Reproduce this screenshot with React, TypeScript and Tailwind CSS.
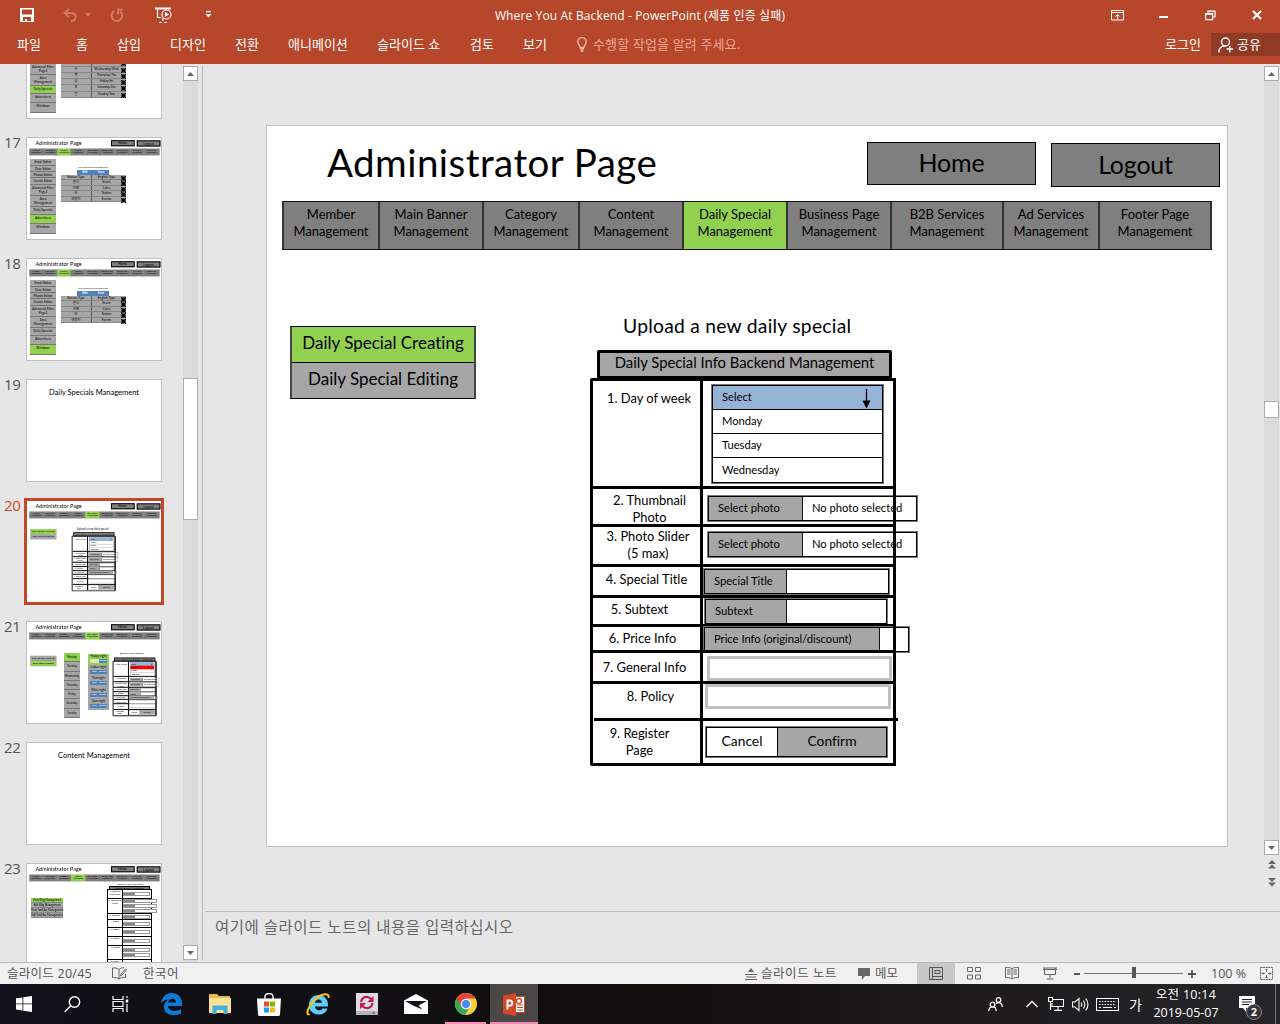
import React from "react";

const CALIBRI = "font-['Lato','Noto_Sans_CJK_KR',sans-serif] [font-variant-ligatures:none]";

/* ---------- slide content ---------- */

const NAV: [string, string][] = [
  ["Member", "w-[96px]"],
  ["Main Banner", "w-[104px]"],
  ["Category", "w-[96px]"],
  ["Content", "w-[104px]"],
  ["Daily Special", "w-[104px]"],
  ["Business Page", "w-[104px]"],
  ["B2B Services", "w-[112px]"],
  ["Ad Services", "w-[96px]"],
  ["Footer Page", "w-[112px]"],
];

function SlideHeader({ active, mini }: { active: number; mini?: boolean }) {
  const edge = mini ? "border-[7px]" : "border";
  return (
    <>
      <div className="absolute left-[60px] top-[12px] whitespace-nowrap text-[38.5px] leading-[48px] tracking-[0.45px]">Administrator Page</div>
      <div className={`absolute left-[600px] top-[16px] flex h-[43px] w-[169px] items-center justify-center border-black bg-[#7f7f7f] pb-px text-[25px] tracking-[-0.2px] ${edge}`}>Home</div>
      <div className={`absolute left-[784px] top-[17px] flex h-[44px] w-[169px] items-center justify-center border-black bg-[#7f7f7f] pb-px text-[25px] tracking-[-0.2px] ${edge}`}>Logout</div>
      <div className="absolute left-[15px] top-[75px] flex h-[49px] border-y-[1.5px] border-l-2 border-y-[#111] border-l-[#333]">
        {NAV.map(([name, w], i) => (
          <div key={name} className={`${w} border-r-2 border-[#333] pt-[4px] text-center text-[13px] leading-[17px] ${i === active ? "bg-[#92d050]" : "bg-[#7f7f7f]"}`}>
            {name}
            <br />
            Management
          </div>
        ))}
      </div>
    </>
  );
}

function SideMenu({ active, className }: { active: number; className: string }) {
  return (
    <div className={`absolute left-[23px] w-[186px] border-x-2 border-y border-x-[#444] border-y-black text-center text-[17px] ${className}`}>
      <div className={`h-[36px] border-b border-black leading-[32px] ${active === 0 ? "bg-[#92d050]" : "bg-[#a6a6a6]"}`}>Daily Special Creating</div>
      <div className={`h-[35px] leading-[32px] ${active === 1 ? "bg-[#92d050]" : "bg-[#a6a6a6]"}`}>Daily Special Editing</div>
    </div>
  );
}

const ROWS: [string[], string][] = [
  [["1. Day of week"], "h-[108px] pt-[9px] pl-[5px] border-b-[3px] group-[.mini]:border-b-[7px]"],
  [["2. Thumbnail", "Photo"], "h-[38px] pt-[3px] pl-[6px] border-b-[3px] group-[.mini]:border-b-[7px]"],
  [["3. Photo Slider", "(5 max)"], "h-[40px] pt-[1px] pl-[3px] border-b-[3px] group-[.mini]:border-b-[7px]"],
  [["4. Special Title"], "h-[31px] pt-[4px] border-b-[3px] group-[.mini]:border-b-[7px]"],
  [["5. Subtext"], "h-[29px] pt-[3px] pr-[14px] border-b-[3px] group-[.mini]:border-b-[7px]"],
  [["6. Price Info"], "h-[26px] pt-[3px] pr-[8px] border-b-[3px] group-[.mini]:border-b-[7px]"],
  [["7. General Info"], "h-[31px] pt-[6px] pr-[4px] border-b-[3px] group-[.mini]:border-b-[7px]"],
  [["8. Policy"], "h-[37px] pt-[4px] pl-[8px]"],
  [["9. Register", "Page"], "h-[42px] pt-[4px] pr-[14px]"],
];

function Pair({ className, left, right, leftW }: { className: string; left: string; right?: string; leftW: string }) {
  return (
    <div className={`absolute flex h-[25px] border-[1.5px] border-black bg-white text-[11.2px] outline-[0.5px] outline-[#777] ${className}`}>
      <div className={`flex shrink-0 items-center whitespace-nowrap border-r-[1.5px] border-[#111] bg-[#a6a6a6] pl-[9px] ${leftW}`}>{left}</div>
      <div className="flex items-center whitespace-nowrap pl-[9px]">{right}</div>
    </div>
  );
}

function SpecialForm({ className, title, titlePos, picked }: { className: string; title: string; titlePos: string; picked?: boolean }) {
  return (
    <div className={`absolute h-[450px] w-[340px] ${className}`}>
      <div className={`absolute whitespace-nowrap leading-[24px] ${titlePos}`}>{title}</div>
      <div className="absolute left-[7px] top-[34px] flex h-[29px] w-[295px] items-center justify-center whitespace-nowrap rounded-[2px] border-[3px] border-black bg-[#a6a6a6] text-[14.8px] group-[.mini]:border-[7px]">
        <span className="relative -top-[2px]">Daily Special Info Backend Management</span>
      </div>
      <div className="absolute left-0 top-[62px] flex h-[388px] w-[306px] rounded-[2px] border-[3px] border-black bg-white group-[.mini]:outline-[4px]">
        <div className="w-[110px] border-r-[3px] border-black text-center text-[12.9px] leading-[17px] group-[.mini]:border-r-[7px]">
          {ROWS.map(([lines, cls]) => (
            <div key={lines[0]} className={`whitespace-nowrap border-black ${cls}`}>
              {lines.map((l) => <div key={l}>{l}</div>)}
            </div>
          ))}
        </div>
        <div className="flex-1">
          {ROWS.map(([lines, cls]) => <div key={lines[0]} className={`border-black ${cls}`} />)}
        </div>
      </div>
      <div className="absolute left-[4px] top-[402px] h-[3px] w-[304px] bg-black group-[.mini]:h-[7px]" />
      <div className="absolute left-[122px] top-[69px] h-[98px] w-[171px] border-[1.5px] border-black bg-white text-[11.2px] outline-[0.5px] outline-[#777]">
        <div className="flex h-[24px] items-center border-b border-black bg-[#95b3d7] pl-[9px]">Select</div>
        <div className={`flex h-[24px] items-center border-b border-black pl-[9px] ${picked ? "bg-[#ff0000]" : ""}`}>Monday</div>
        <div className="flex h-[24px] items-center border-b border-black pl-[9px]">Tuesday</div>
        <div className="flex h-[24px] items-center pl-[9px]">Wednesday</div>
      </div>
      <svg className="absolute left-[271px] top-[73px]" width="10" height="20" viewBox="0 0 10 20">
        <path d="M5.500 0v14" stroke="#000" strokeWidth="1.300" />
        <path d="M1.500 11.500h8l-4 8z" />
      </svg>
      <Pair className="left-[118px] top-[180px] w-[209px]" left="Select photo" right="No photo selected" leftW="w-[94px]" />
      <Pair className="left-[118px] top-[216px] w-[209px]" left="Select photo" right="No photo selected" leftW="w-[94px]" />
      <Pair className="left-[114px] top-[253px] w-[185px]" left="Special Title" leftW="w-[82px]" />
      <Pair className="left-[115px] top-[283px] w-[182px]" left="Subtext" leftW="w-[81px]" />
      <div className="absolute left-[113px] top-[308px] h-[3px] w-[192px] bg-black" />
      <Pair className="left-[114px] top-[311px] w-[205px]" left="Price Info (original/discount)" leftW="w-[175px]" />
      <div className="absolute left-[113px] top-[334px] h-[3px] w-[192px] bg-black" />
      <div className="absolute left-[117px] top-[340px] h-[25px] w-[185px] rounded-[1px] border-[3px] border-[#bfbfbf] bg-white" />
      <div className="absolute left-[115px] top-[368px] h-[25px] w-[186px] rounded-[1px] border-[3px] border-[#bfbfbf] bg-white" />
      <div className="absolute left-[116px] top-[411px] flex h-[30px] w-[181px] border-[1.5px] border-black text-[13.800px] outline-[0.5px] outline-[#777]">
        <div className="flex w-[71px] items-center justify-center border-r-[1.5px] border-black bg-white pb-px">Cancel</div>
        <div className="flex flex-1 items-center justify-center bg-[#a6a6a6] pb-px">Confirm</div>
      </div>
      <div className="absolute left-[303px] top-[62px] h-[388px] w-[3px] bg-black group-[.mini]:w-[7px]" />
    </div>
  );
}

function DailySlide({ mini }: { mini?: boolean }) {
  return (
    <div className={`relative h-[720px] w-[960px] shrink-0 bg-white text-black ${CALIBRI}`}>
      <SlideHeader active={4} mini={mini} />
      <SideMenu active={0} className="top-[200px]" />
      <SpecialForm className="left-[323px] top-[190px]" title="Upload a new daily special" titlePos="left-[33px] top-[-2px] text-[19.3px] tracking-[0.250px]" />
    </div>
  );
}

/* ---------- slide thumbnails ---------- */

function Scaled({ children }: { children: React.ReactNode }) {
  return <div className={`group mini absolute left-0 top-0 h-[720px] w-[960px] origin-top-left scale-[0.14] text-black ${CALIBRI}`}>{children}</div>;
}

const FILTERS: [string, string][] = [
  ["Email Editor", "h-[7px]"],
  ["Date Editor", "h-[6px]"],
  ["Photos Editor", "h-[6px]"],
  ["Search Editor", "h-[7px]"],
  ["Advanced Filter Page2", "h-[11px]"],
  ["Area Management", "h-[11px]"],
  ["Daily Specials", "h-[8px]"],
  ["Advertisers", "h-[9px]"],
  ["Windows", "h-[10px]"],
];

function RowMark() {
  return (
    <svg className="mt-px" width="5" height="5" viewBox="0 0 5 5">
      <path d="M.5.500h4v4h-4z" />
      <path d="M0 0l5 5M5 0L0 5" stroke="#000" />
    </svg>
  );
}

function FilterSlide({ active, days }: { active: number; days?: boolean }) {
  const rows = days
    ? [["월", "Monday"], ["화", "Tuesday/Tue"], ["수", "Wednesday/Wed"], ["목", "Thursday/Thu"], ["금", "Friday/Fri"], ["토", "Saturday/Sat"], ["일", "Sunday/Sun"]]
    : [["Korean Type", "English Type"], ["한식", "Event"], ["카페", "Cafes"], ["바", "Nation"], ["여행지", "Events"]];
  return (
    <div className={CALIBRI}>
      <Scaled><SlideHeader active={2} mini /></Scaled>
      <div className="absolute left-[3px] top-[21px] w-[26px] bg-[#a6a6a6] text-center text-[3.2px] leading-[4px]">
        {FILTERS.map(([f, h], i) => (
          <div key={f} className={`${h} border-b border-[#777] px-[2px] pt-[0.5px] ${i === active ? "bg-[#92d050]" : ""}`}>{f}</div>
        ))}
      </div>
      <div className="absolute left-[51px] top-[28px] whitespace-nowrap text-[2.1px] leading-[3px]">Click and drag to rearrange order</div>
      <div className="absolute left-[50px] top-[32px] flex h-[5px] w-[32px] bg-[#4f81bd] text-center text-[3px] font-bold leading-[5px] text-white">
        <span className="flex-1">Edit</span><span className="flex-1">Save</span>
      </div>
      <div className="absolute left-[34px] top-[37px] w-[65px] text-center text-[3.2px] leading-[4px]">
        {rows.map(([a, b]) => (
          <div key={b} className={`flex items-stretch border-b border-[#888] bg-[#a6a6a6] ${days ? "h-[6.3px]" : "h-[5.4px]"}`}>
            <span className="w-[31px] border-r border-[#555]">{a}</span>
            <span className="flex-1">{b}</span>
            <RowMark />
          </div>
        ))}
      </div>
    </div>
  );
}

function EditSlide() {
  return (
    <div className={CALIBRI}>
      <Scaled>
        <SlideHeader active={4} mini />
        <SideMenu active={1} className="top-[242px]" />
        <SpecialForm className="left-[615px] top-[219px]" picked title="Edit this daily special" titlePos="left-[48px] top-[-12px] text-[19px]" />
      </Scaled>
      <div className="absolute left-[37px] top-[31px] w-[16px] bg-[#a6a6a6] text-center text-[2.8px] leading-[8px]">
        {["Monday", "Tuesday", "Wednesday", "Thursday", "Friday", "Saturday", "Sunday"].map((d, i) => (
          <div key={d} className={`h-[9.3px] border-b border-[#777] ${i === 0 ? "bg-[#92d050]" : ""}`}>{d}</div>
        ))}
      </div>
      <div className="absolute left-[61px] top-[32px] w-[21px] bg-[#a6a6a6] text-center text-[3px] leading-[5px]">
        {["Happy night", "Ladies night", "Pub night", "Wine night", "Quiz night"].map((d, i) => (
          <div key={d} className={`h-[11.2px] whitespace-nowrap px-[2px] ${i === 0 ? "bg-[#92d050]" : ""}`}>
            {d}
            <div className="flex h-[4px] text-[2.4px] leading-[4px] text-white">
              <span className={`flex-1 ${i === 0 ? "bg-[#d7e4bd]" : "bg-[#4f81bd]"}`}>Edit</span>
              <span className="flex-1 bg-[#4f81bd]">Delete</span>
            </div>
          </div>
        ))}
      </div>
    </div>
  );
}

const CONTENT_ROWS: [string, string, number][] = [
  ["1. Thumbnail Photo/Video", "h-[9px]", 1],
  ["2. Photo Slider (5 max)", "h-[15px]", 3],
  ["3. Blog Title", "h-[6px]", 1],
  ["4. Subtext", "h-[8px]", 1],
  ["5. Category", "h-[9px]", 1],
  ["6. Content", "h-[9px]", 1],
  ["7. Heading", "h-[14px]", 2],
  ["8. Footer", "h-[9px]", 1],
];

function ContentSlide() {
  return (
    <div className={CALIBRI}>
      <Scaled><SlideHeader active={3} mini /></Scaled>
      <div className="absolute left-[4px] top-[34px] w-[32px] bg-[#a6a6a6] text-center text-[2.7px] leading-[4px]">
        {["View Blog Management", "Edit Blog Management", "View YouTube Management", "Edit YouTube Management"].map((d, i) => (
          <div key={d} className={`h-[5px] whitespace-nowrap border-b border-[#888] ${i === 0 ? "bg-[#92d050]" : ""}`}>{d}</div>
        ))}
      </div>
      <div className="absolute left-[90px] top-[18px] whitespace-nowrap text-[2.6px] leading-[4px]">Create a new blog post</div>
      <div className="absolute left-[82px] top-[22px] h-[4px] w-[41px] border border-black bg-[#777] text-center text-[2px] leading-[2px]">Blog Info Backend Management</div>
      <div className="absolute left-[80px] top-[25px] w-[45px] border border-black bg-white">
        {CONTENT_ROWS.map(([t, h, n]) => (
          <div key={t} className={`flex border-b border-black ${h}`}>
            <div className="w-[15px] shrink-0 border-r border-black text-center text-[1.9px] leading-[2.5px]">{t}</div>
            <div className="flex w-[27px] shrink-0 flex-col justify-center gap-[1px]">
              {Array.from({ length: n }, (_, k) => (
                <div key={k} className={`flex h-[4px] border border-[#999] bg-white ${h === "h-[15px]" ? "w-[34px]" : "w-[27px]"}`}>
                  <span className="w-[11px] bg-[#888]" />
                </div>
              ))}
            </div>
          </div>
        ))}
      </div>
    </div>
  );
}

function TitleSlide({ text }: { text: string }) {
  return <div className={`pt-[8px] text-center text-[7.5px] leading-[9px] text-black ${CALIBRI}`}>{text}</div>;
}

function Thumb({ n, active, children }: { n: number; active?: boolean; children: React.ReactNode }) {
  return (
    <div className="flex h-[121px] shrink-0">
      <div className={`mt-[-1px] w-[26px] pl-[4px] text-[15px] leading-[12px] tracking-[-0.4px] ${active ? "text-[#d24726]" : "text-[#555]"}`}>{n}</div>
      <div className={`relative h-[103px] w-[136px] border bg-white ${active ? "border-[#c5472a] outline-2 outline-[#c5472a]" : "border-[#c0c0c0]"}`}>
        <div className="relative h-[101px] w-[134px] overflow-hidden">{children}</div>
      </div>
    </div>
  );
}

/* ---------- window chrome ---------- */

function ScrollButton({ up }: { up?: boolean }) {
  return (
    <div className="flex h-[15px] w-[15px] shrink-0 items-center justify-center border border-[#ababab] bg-white">
      <svg width="7" height="4" viewBox="0 0 7 4" fill="#666"><path d={up ? "M0 4L3.500 0 7 4z" : "M0 0h7L3.500 4z"} /></svg>
    </div>
  );
}

function TitleBar() {
  return (
    <header className="h-[64px] shrink-0 bg-[#b7472a] text-[13px] text-white">
      <div className="grid h-[32px] grid-cols-[1fr_auto_1fr] items-center">
        <div className="flex items-center pb-[2px] pl-[20px]">
          <svg width="14" height="14" viewBox="0 0 14 14"><path fill="#fff" fillRule="evenodd" d="M0 0h14v14H0zM2 1.500v5h10v-5zM3 9v4h2v-2h2v2h4V9z" /></svg>
          <svg className="ml-[29px]" width="29" height="15" viewBox="0 0 29 15" fill="none" stroke="#d27a63" strokeWidth="2"><path d="M6 1L1.500 5 6 9M2 5h7c5 0 5 8-1 8" /><path d="M22 5h6l-3 3.500z" fill="#d27a63" stroke="none" /></svg>
          <svg className="ml-[18px]" width="14" height="15" viewBox="0 0 14 15" fill="none" stroke="#d27a63" strokeWidth="2"><path d="M4 3.200a5.300 5.300 0 1 0 6 .2M7 1.500h5.500M8 1v5.500" /></svg>
          <svg className="ml-[31px]" width="17" height="17" viewBox="0 0 17 17" fill="none" stroke="#fff" strokeWidth="1.200"><path d="M0 1.500h16" strokeWidth="2" /><path d="M2.500 2v8.500H6M8 11v3M4 15.500h3M9 15.500h3" /><circle cx="11.500" cy="7.500" r="4.500" /><path d="M10 5v5l4-2.500z" fill="#fff" stroke="none" /></svg>
          <svg className="ml-[33px]" width="7" height="8" viewBox="0 0 7 8" fill="#fff"><path d="M1 0h5v1.200H1zM.5 3h6l-3 3.500z" /></svg>
        </div>
        <div className="whitespace-nowrap pl-[0px] text-[12px] tracking-[0.13px]">Where You At Backend - PowerPoint (제품 인증 실패)</div>
        <div className="flex items-center justify-end pb-[2px] pr-[18px]">
          <svg width="13" height="11" viewBox="0 0 13 11" fill="none" stroke="#fff"><path d="M.5.500h12v9.500H.5zM.5 2.500h12M6.500 9.500V5M4.500 6.500l2-2 2 2" /></svg>
          <svg className="ml-[35px] mt-[4px]" width="9" height="2" viewBox="0 0 9 2"><path fill="#fff" d="M0 0h9v2H0z" /></svg>
          <svg className="ml-[37px]" width="11" height="11" viewBox="0 0 11 11" fill="none" stroke="#fff" strokeWidth="1.200"><path d="M.6 3.600h7v6h-7zM3 3.500V1h7v6H8M3 1.500h7M.5 4.200h7" /></svg>
          <svg className="ml-[36px]" width="10" height="10" viewBox="0 0 10 10"><path d="M1 1l8 8M9 1L1 9" stroke="#fff" strokeWidth="2.200" /></svg>
        </div>
      </div>
      <nav className="flex h-[25px] items-center whitespace-nowrap pl-[17px]">
        <span className="w-[59px]">파일</span>
        <span className="w-[41px]">홈</span>
        <span className="w-[53px]">삽입</span>
        <span className="w-[65px]">디자인</span>
        <span className="w-[53px]">전환</span>
        <span className="w-[89px]">애니메이션</span>
        <span className="w-[93px]">슬라이드 쇼</span>
        <span className="w-[53px]">검토</span>
        <span className="w-[54px]">보기</span>
        <svg className="mr-[6px]" width="10" height="15" viewBox="0 0 10 15" fill="none" stroke="#eeb5a6" strokeWidth="1.400"><path d="M3 10.500C3 8 .8 7.500.8 4.800a4.200 4.200 0 0 1 8.400 0C9.200 7.500 7 8 7 10.500zM3 12h4M3.500 14h3" /></svg>
        <span className="tracking-[0.15px] text-[#eaa797]">수행할 작업을 알려 주세요.</span>
        <span className="ml-auto mr-[10px]">로그인</span>
        <div className="flex h-[23px] w-[69px] items-center gap-[4px] bg-[#8f3a24] pl-[7px]">
          <svg width="15" height="16" viewBox="0 0 15 16" fill="none" stroke="#fff" strokeWidth="1.400"><circle cx="7.500" cy="5" r="4" /><path d="M.8 15.500c0-4 2.500-6.500 6-6.500M8.500 12h6.500M11.700 9v6.500" /></svg>
          공유
        </div>
      </nav>
    </header>
  );
}

function StatusBar() {
  return (
    <div className="flex h-[22px] shrink-0 items-center whitespace-nowrap border-t border-[#b8b8b8] bg-[#f0f0f0] pl-[7px] text-[12.5px] text-[#555]">
      <span className="w-[105px] pt-px tracking-[0.250px]">슬라이드 20/45</span>
      <svg width="15" height="13" viewBox="0 0 15 13" fill="none" stroke="#666"><path d="M7 2.500C5 .8 3 .8.500 1v9.500c2.500 0 4.500 0 6.500 1.500V2.500C8.500 1 10 .8 12 .8M7 12c1.500-1.300 3.500-1.500 6.500-1.500V7M8.500 9l.5-2 4.500-5 1 1-4.500 5z" /></svg>
      <span className="ml-[16px] pt-px tracking-[0.500px]">한국어</span>
      <svg className="ml-auto" width="12" height="12" viewBox="0 0 12 12"><path d="M0 6.500h12M1 9h10M0 11.500h12" stroke="#666" /><path d="M6 0l3 4H3z" fill="#666" /></svg>
      <span className="ml-[4px] w-[97px] pt-px tracking-[0.550px]">슬라이드 노트</span>
      <svg width="12" height="12" viewBox="0 0 12 12" fill="#666"><path d="M0 0h12v8H7l-3 4V8H0z" /></svg>
      <span className="ml-[5px] w-[42px] pt-px">메모</span>
      <div className="flex h-[21px] w-[38px] items-center justify-center bg-[#c8c8c8]">
        <svg width="14" height="13" viewBox="0 0 14 13" fill="none" stroke="#555"><path d="M.5.500h13v12H.5zM3.500.500v12M6 3.500h5v3H6zM3.500 9.500h10" /></svg>
      </div>
      <svg className="ml-[12px]" width="14" height="13" viewBox="0 0 14 13" fill="none" stroke="#666"><path d="M.5.500h5v4h-5zM8.500.500h5v4h-5zM.5 8h5v4h-5zM8.500 8h5v4h-5z" /></svg>
      <svg className="ml-[24px]" width="14" height="13" viewBox="0 0 14 13" fill="none" stroke="#666"><path d="M7 1.500C5 .5 3 .5.500.5v10c2.500 0 4.500 0 6.500 1.500C9 10.500 11 10.500 13.500 10.500V.5C11 .5 9 .5 7 1.500v10M2 3h3.500M2 5h3.500M2 7h3.500M8.500 3H12M8.500 5H12M8.500 7H12" /></svg>
      <svg className="ml-[24px]" width="14" height="13" viewBox="0 0 14 13" fill="none" stroke="#666"><path d="M0 1h14M1.500 1v6.500h11V1M7 7.500v4M3.500 12h7M0 2.500h14" /></svg>
      <span className="ml-[17px] h-[2px] w-[6px] bg-[#555]" />
      <div className="relative ml-[4px] h-px w-[99px] bg-[#777]"><span className="absolute left-[48px] top-[-6px] h-[11px] w-[4px] bg-[#555]" /></div>
      <svg className="ml-[5px]" width="8" height="8" viewBox="0 0 8 8"><path d="M0 4h8M4 0v8" stroke="#555" strokeWidth="1.800" /></svg>
      <span className="ml-[15px] w-[49px] pt-px">100 %</span>
      <svg className="mr-[7px]" width="13" height="13" viewBox="0 0 13 13" fill="none" stroke="#666"><path d="M.5.500h12v12H.5z" strokeDasharray="2 .6" /><path d="M6.500 2v3M6.500 8v3M2 6.500h3M8 6.500h3M5.500 3l1-1 1 1M5.500 10l1 1 1-1M3 5.500l-1 1 1 1M10 5.500l1 1-1 1" /></svg>
    </div>
  );
}

function Slot({ children, className = "" }: { children: React.ReactNode; className?: string }) {
  return <div className={`flex h-[40px] w-[49px] items-center justify-center ${className}`}>{children}</div>;
}

function Taskbar() {
  return (
    <div className="flex h-[40px] shrink-0 items-center bg-linear-to-r from-[#10111a] via-[#120e0c] via-50% to-[#26262a] text-white">
      <div className="mr-[3px] flex w-[144px]">
        <Slot className="w-[48px]!"><svg width="16" height="16" viewBox="0 0 16 16" fill="#fff"><path d="M0 2.300L6.500 1.400v6.100H0zM7.300 1.300L16 0v7.500H7.300zM0 8.300h6.500v6.200L0 13.600zM7.300 8.300H16V16l-8.700-1.300z" /></svg></Slot>
        <Slot className="w-[48px]!"><svg width="17" height="17" viewBox="0 0 17 17" fill="none" stroke="#fff" strokeWidth="1.400"><circle cx="10.500" cy="6" r="5.200" /><path d="M6.800 9.800L.7 16" /></svg></Slot>
        <Slot className="w-[48px]!"><svg width="17" height="16" viewBox="0 0 17 16" fill="none" stroke="#fff" strokeWidth="1.200"><path d="M1 0v3.500h10V0M1 16v-3.500h10V16M1 5.500h10v5H1zM15 0v2M15 8v8" /><path d="M15 3.500v3" strokeWidth="2.500" /></svg></Slot>
      </div>
      <Slot><svg width="21" height="22" viewBox="0 0 21 22"><path fill="#0c7cd8" d="M0 10C1 4 5 0 10.500 0 17 0 21 4.500 21 10v3H7c.2 3.500 3.200 5 6.500 5 2.500 0 4.500-.6 6.500-1.700v4.200c-2.300 1-4.500 1.500-7.500 1.500C6.500 22 3 18.500 3 14c0-3.500 2-6 5-7.500-3.500.2-6.500 1.500-8 3.500zM7 9.500h8C15 7 13.600 5.700 11.400 5.700S7.500 7 7 9.500z" /></svg></Slot>
      <Slot className="pr-[2px]"><svg width="22" height="20" viewBox="0 0 22 20"><path fill="#e8b84a" d="M0 0h8l2 2h11v17H0z" /><path fill="#fbe396" d="M0 4h22v15H0z" /><path fill="#45b1e0" d="M3.500 11.500h15V20h-4v-4h-7v4h-4z" /></svg></Slot>
      <Slot className="pr-[2px]"><svg width="24" height="23" viewBox="0 0 24 23"><path d="M8 6V3.500a4 3 0 0 1 8 0V6" fill="none" stroke="#fff" strokeWidth="1.400" /><path fill="#fff" d="M0 5.500h24L23 21.500q0 1.500-2 1.500H3q-2 0-2-1.500z" /><path fill="#e8502c" d="M7 8.500h5v5H7z" /><path fill="#7fb900" d="M13 8.500h5v5h-5z" /><path fill="#18a0e8" d="M7 14.500h5v5H7z" /><path fill="#fdb813" d="M13 14.500h5v5h-5z" /></svg></Slot>
      <Slot><svg width="25" height="25" viewBox="0 0 25 25"><path fill="#5bcdf8" d="M3 13C3 7 7 3 12.500 3S22 7 22 13v1.500H9c.3 2.500 2 3.700 4 3.700 1.700 0 2.700-.5 3.500-1.800h5C20 20.500 17 22.500 12.500 22.500 7 22.500 3 18.500 3 13zM9 10.800h7c-.3-2-1.500-3.300-3.400-3.300S9.400 8.800 9 10.800z" /><path d="M3.500 22C-1 24 2 14 9 7.500S24 .5 22.500 6" fill="none" stroke="#f6c51c" strokeWidth="2" /></svg></Slot>
      <Slot className="pr-[2px]"><svg width="22" height="22" viewBox="0 0 22 22"><path fill="#dedede" d="M0 0h22v22H0z" /><path fill="#b5b5b5" d="M0 18h22v4H0z" /><path d="M5 9c.5-4 3.500-5.500 6.500-5 2 .3 3 1.300 4 2.500M16.500 10c-.5 4-3.500 5.500-6.500 5-2-.3-3-1.300-4-2.500" fill="none" stroke="#c2185b" strokeWidth="2.200" /><path fill="#c2185b" d="M17.500 3v6h-6zM4 16v-6h6z" /><path fill="#555" d="M16 19.500h3v1h-3z" /></svg></Slot>
      <Slot className="pr-[2px]"><svg width="24" height="20" viewBox="0 0 24 20"><path fill="#fff" d="M0 6.500L12 0l12 6.500V20H0z" /><path fill="#11111a" d="M1 7h22l-8.500 4.500 4 4L9 11.500z" /></svg></Slot>
      <Slot className="mx-[4px] w-[41px]! border-b-2 border-[#f58bb8] pt-[2px]">
        <svg width="22" height="22" viewBox="0 0 22 22"><circle cx="11" cy="11" r="11" fill="#fbd037" /><path fill="#e2453a" d="M11 11L1.500 5.500A11 11 0 0 1 20.500 5.500H11z" /><path fill="#3aa757" d="M1.500 5.500A11 11 0 0 0 10 22l5.500-9L11 11z" /><path fill="#e2453a" d="M1.500 5.500L6.500 13 11 6z" /><circle cx="11" cy="11" r="5.300" fill="#fff" /><circle cx="11" cy="11" r="4.200" fill="#4b8bf4" /></svg>
      </Slot>
      <div className="flex h-[40px] w-[48px] items-center justify-center border-b-2 border-[#f58bb8] bg-[#4b4745] pt-[2px]">
        <svg width="22" height="23" viewBox="0 0 22 23"><path fill="#fff" stroke="#d24726" d="M11 3.500h10.500v16H11z" /><path d="M14 12h6M14 14.500h6M14 17h6" stroke="#d24726" /><circle cx="16" cy="8" r="2.500" fill="none" stroke="#d24726" strokeWidth="1.300" /><path fill="#d24726" d="M0 2.500L13 0v23L0 20.500z" /><path d="M4.500 16.500v-9h2.200a2.500 2.500 0 0 1 0 5.200H4.500" fill="none" stroke="#fff" strokeWidth="1.900" /></svg>
      </div>
      <div className="ml-auto flex items-center">
        <svg width="15" height="15" viewBox="0 0 15 15" fill="none" stroke="#fff" strokeWidth="1.300"><circle cx="4.500" cy="7.500" r="2.300" /><circle cx="10.500" cy="3" r="2.300" /><path d="M.8 14c0-5.500 7.400-5.500 7.400 0M8 6.800c3-2.500 6.300-.8 6.300 3.200" /></svg>
        <svg className="ml-[23px]" width="12" height="8" viewBox="0 0 12 8" fill="none" stroke="#fff" strokeWidth="1.300"><path d="M.5 7L6 1.500 11.500 7" /></svg>
        <svg className="ml-[10px]" width="16" height="14" viewBox="0 0 16 14" fill="none" stroke="#fff" strokeWidth="1.100"><path d="M5 2.500h10.500v7H4V6M10 10v3M6 13.400h8M.5.500h4v4h-4zM2.500 5v8" /></svg>
        <svg className="ml-[8px]" width="17" height="15" viewBox="0 0 17 15" fill="none" stroke="#fff" strokeWidth="1.100"><path d="M.5 5h2.500L7 1.500v12L3 10H.5zM9 5.500q1.500 2 0 4M11.300 3.500q3 4 0 8M13.700 1.500q4.500 6 0 12" /></svg>
        <svg className="ml-[7px]" width="23" height="13" viewBox="0 0 23 13" fill="none" stroke="#fff" strokeWidth="1.100"><path d="M.5.500h22v12H.5z" /><path d="M3 3.500h17M3 6.500h17" strokeDasharray="1.500 1.300" /><path d="M3 9.500h2M7 9.500h9M18 9.500h2" /></svg>
        <span className="ml-[10px] w-[16px] text-[14px]">가</span>
        <div className="w-[82px] text-center text-[12.5px] leading-[18px]"><span className="tracking-[0.300px]">오전 10:14</span><br />2019-05-07</div>
        <div className="relative ml-[12px] h-[16px] w-[17px]">
          <svg width="16" height="16" viewBox="0 0 16 16"><path fill="#fff" d="M0 0h16v12H7v4l-3-4H0z" /><path d="M3 3.500h10M3 6h10M3 8.500h7" stroke="#222" /></svg>
          <span className="absolute left-[7px] top-[8px] flex size-[16px] items-center justify-center rounded-full border border-[#888] bg-[#333] text-[11px] font-bold">2</span>
        </div>
        <div className="ml-[19px] h-[40px] w-[5px] border-l border-[#777]" />
      </div>
    </div>
  );
}

export default function App() {
  return (
    <div className="flex h-[1024px] w-[1280px] flex-col overflow-hidden bg-[#e6e6e6] font-['Open_Sans','Noto_Sans_CJK_KR',sans-serif]">
      <TitleBar />
      <div className="flex min-h-0 flex-1">
        <aside className="flex w-[205px] shrink-0">
          <div className="w-[183px] overflow-hidden">
            <div className="mt-[-48px] flex flex-col">
              <Thumb n={16}><FilterSlide active={6} days /></Thumb>
              <Thumb n={17}><FilterSlide active={7} /></Thumb>
              <Thumb n={18}><FilterSlide active={8} /></Thumb>
              <Thumb n={19}><TitleSlide text="Daily Specials Management" /></Thumb>
              <Thumb n={20} active><Scaled><DailySlide mini /></Scaled></Thumb>
              <Thumb n={21}><EditSlide /></Thumb>
              <Thumb n={22}><TitleSlide text="Content Management" /></Thumb>
              <Thumb n={23}><ContentSlide /></Thumb>
            </div>
          </div>
          <div className="flex w-[15px] flex-col bg-[#dbdbdb] pb-[2px]">
            <div className="h-[2px] bg-[#e6e6e6]" />
            <ScrollButton up />
            <div className="mt-[297px] h-[142px] border border-[#ababab] bg-white" />
            <div className="flex-1" />
            <ScrollButton />
          </div>
          <div className="my-[2px] ml-[4px] w-px bg-[#b8b8b8]" />
        </aside>
        <main className="flex min-w-0 flex-1 flex-col">
          <div className="flex h-[847px] shrink-0">
            <div className="flex-1 pl-[61px] pt-[61px]">
              <div className="w-[962px] border border-[#c3c3c3]"><DailySlide /></div>
            </div>
            <div className="mr-px flex w-[15px] flex-col items-center">
              <div className="flex h-[791px] w-full flex-col bg-[#dbdbdb]">
                <div className="h-[2px] bg-[#e6e6e6]" />
                <ScrollButton up />
                <div className="mt-[320px] h-[17px] border border-[#ababab] bg-white" />
                <div className="flex-1" />
                <ScrollButton />
              </div>
              <svg className="mt-[5px]" width="8" height="9" viewBox="0 0 8 9" fill="#666"><path d="M0 4L4 0l4 4zM0 8.500l4-4 4 4z" /></svg>
              <svg className="mt-[9px]" width="8" height="9" viewBox="0 0 8 9" fill="#666"><path d="M0 0h8L4 4zM0 4.500h8l-4 4z" /></svg>
            </div>
          </div>
          <div className="flex-1 border-t border-[#bcbcbc] pl-[10px] pt-[4px] text-[15.5px] leading-[22px] tracking-[0.500px] text-[#666]">여기에 슬라이드 노트의 내용을 입력하십시오</div>
        </main>
      </div>
      <StatusBar />
      <Taskbar />
    </div>
  );
}
